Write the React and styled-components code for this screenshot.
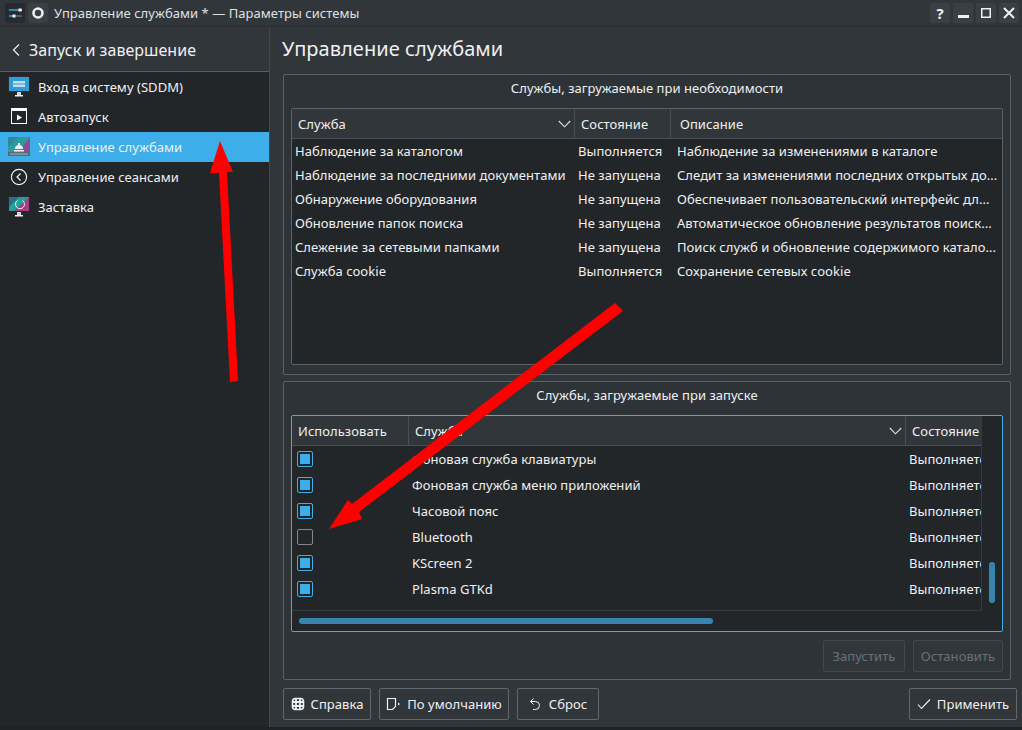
import React from "react";
import styled, { createGlobalStyle } from "styled-components";

const Global = createGlobalStyle`
  html, body { margin: 0; padding: 0; background: #31363b; }
  body { font-family: "Noto Sans", sans-serif; font-size: 13px; color: #eff0f1; letter-spacing: 0.05px; }
  * { box-sizing: border-box; }
`;
const Win = styled.div`
  position: relative; width: 1022px; height: 730px; overflow: hidden;
  display: flex; flex-direction: column; background: #31363b;
`;
const TitleBar = styled.div`
  height: 27px; flex: none; display: flex; align-items: center; padding: 1px 0 2px 5px;
  background: #31363b; border-bottom: 1px solid #2b2f33;
`;
const TitleIcon = styled.div`
  width: 20px; height: 20px; margin-right: 3px; border-radius: 2px; display: flex;
  align-items: center; justify-content: center; background: ${p => p.$dark ? "#272b2f" : "#3a3f44"};
`;
const TitleText = styled.div`
  flex: 1; margin-left: 3px; font-size: 13px; color: #dfe1e2; white-space: nowrap; line-height: 18px;
`;
const WinButton = styled.div`
  width: 20px; height: 20px; margin-right: 3px; border-radius: 2px; background: #3a3f44;
  display: flex; align-items: center; justify-content: center; color: #eff0f1;
  font-weight: 700; font-size: 15px; line-height: 20px;
`;
const Body = styled.div`
  flex: 1; display: flex; min-height: 0; height: 700px;
`;
const Sidebar = styled.div`
  width: 270px; flex: none; display: flex; flex-direction: column; border-right: 1px solid #43484d;
`;
const SideHeader = styled.div`
  height: 45px; flex: none; display: flex; align-items: center; padding: 1px 0 0 11px; gap: 8px;
  font-size: 16px; border-bottom: 1px solid #5a5f64; color: #eff0f1;
`;
const SideList = styled.div`
  flex: 1; background: #232629;
`;
const SideItem = styled.div`
  height: 30px; display: flex; align-items: center; padding-left: 8px; gap: 8px;
  background: ${p => p.$selected ? "#3daee9" : "transparent"};
  color: #eff0f1; font-size: 13px; white-space: nowrap;
`;
const Main = styled.div`
  flex: 1; min-width: 0; display: flex; flex-direction: column; padding: 0 5px 0 13px;
`;
const Heading = styled.div`
  height: 47px; flex: none; font-size: 20px; line-height: 44px; color: #eff0f1; margin-left: -1px;
`;
const Group = styled.div`
  width: 728px; height: ${p => p.$h}px; flex: none; margin-bottom: ${p => p.$mb}px;
  border: 1px solid #5c6166; border-radius: 2px; background: #2e3338;
  display: flex; flex-direction: column; padding: 0 7px;
`;
const GroupTitle = styled.div`
  height: 33px; flex: none; display: flex; align-items: center; justify-content: center;
  font-size: 13px; color: #eff0f1; padding-bottom: 8px;
`;
const Table = styled.div`
  height: ${p => p.$h}px; flex: none; position: relative; background: #232629;
  border: 1px solid ${p => p.$focus ? "#3daee9" : "#5c6166"}; border-radius: 2px; overflow: hidden;
  display: flex; flex-direction: column;
`;
const HeaderRow = styled.div`
  height: ${p => p.$h}px; flex: none; display: flex; background: #31363b;
  border-bottom: 1px solid #4a4f54; width: ${p => p.$w}px; overflow: hidden;
`;
const HeaderCell = styled.div`
  width: ${p => p.$w}px; flex: none; display: flex; align-items: center; justify-content: space-between;
  padding: 0 3px 0 ${p => p.$pl || 6}px; border-right: ${p => p.$last ? "none" : "1px solid #4a4f54"};
  color: #eff0f1; font-size: 13px; white-space: nowrap; overflow: hidden;
`;
const Row = styled.div`
  height: ${p => p.$h}px; flex: none; display: flex; align-items: center; color: #eff0f1;
  font-size: 13px; white-space: nowrap;
`;
const Cell = styled.div`
  width: ${p => p.$w}px; flex: none; padding-left: ${p => p.$pl}px; overflow: hidden; white-space: nowrap;
`;
const Check = styled.div`
  width: 16px; height: 16px; border-radius: 2px; margin-left: 5px; padding: 2px;
  border: 1px solid ${p => p.$on ? "#3daee9" : "#85888b"};
  &::after { content: ""; display: ${p => p.$on ? "block" : "none"}; width: 100%; height: 100%; background: #3daee9; }
`;
const ViewPort = styled.div`
  width: 690px; height: 195px; flex: none; border-right: 1px solid #36393d; border-bottom: 1px solid #36393d;
  display: flex; flex-direction: column; overflow: hidden;
`;
const VThumb = styled.div`
  position: absolute; left: 697px; top: 146px; width: 6px; height: 41px; border-radius: 3px; background: #3784b0;
`;
const HThumb = styled.div`
  position: absolute; left: 7px; top: 202px; width: 414px; height: 6px; border-radius: 3px; background: #3784b0;
`;
const ActionRow = styled.div`
  display: flex; justify-content: flex-end; gap: 8px; margin-top: 8px;
`;
const Button = styled.div`
  height: 32px; width: ${p => p.$w}px; flex: none; display: flex; align-items: center; justify-content: center;
  gap: ${p => p.$gap || 6}px; border-radius: 2px; font-size: 13px; white-space: nowrap; background: #31363b;
  border: 1px solid ${p => p.$disabled ? "#43484c" : "#62676b"};
  color: ${p => p.$disabled ? "#6b7075" : "#eff0f1"};
`;
const Footer = styled.div`
  display: flex; gap: 8px; margin-top: 8px;
`;
const Spacer = styled.div`flex: 1;`;
const BottomEdge = styled.div`
  height: 3px; flex: none; background: #1f2225;
`;
const ArrowLayer = styled.svg`
  position: absolute; left: 0; top: 0; width: 1022px; height: 730px; pointer-events: none;
`;

const Chevron = () => (
  <svg width="10" height="14" viewBox="0 0 10 14" fill="none"><path d="M8 1.5 2.5 7 8 12.5" stroke="#eff0f1" strokeWidth="1.2"/></svg>
);
const Down = () => (
  <svg width="13" height="8" viewBox="0 0 13 8" fill="none"><path d="M.8 1 6.5 6.8 12.2 1" stroke="#dfe1e2" strokeWidth="1.1"/></svg>
);
const MonitorLogin = () => (
  <svg width="22" height="22" viewBox="0 0 22 22">
    <rect y="0" width="22" height="16" fill="#2a2e32"/><rect x="1" y="1" width="20" height="14" fill="#2f9ed8"/>
    <rect x="5" y="5" width="12" height="2.5" fill="#c9dbe6"/><rect x="5" y="8.5" width="12" height="2.5" fill="#c9dbe6"/>
    <rect x="9" y="16" width="4" height="3" fill="#d5d8da"/><rect x="7" y="19" width="8" height="1.5" fill="#eff0f1"/>
  </svg>
);
const Autostart = () => (
  <svg width="22" height="22" viewBox="0 0 22 22" fill="none">
    <rect x="3.5" y="2.5" width="15" height="15" stroke="#fcfcfc"/><rect x="3" y="2" width="16" height="3" fill="#fcfcfc"/>
    <path d="M9 8.5v6l5-3z" fill="#fcfcfc"/>
  </svg>
);
const ServiceIcon = () => (
  <svg width="22" height="22" viewBox="0 0 22 22">
    <rect x="0" y="1" width="22" height="16" fill="#2a9ca0"/>
    <path d="M22 1v16H10z" fill="#8e4b93"/>
    <path d="M0 1h11L0 11z" fill="#34869c"/>
    <rect x="0" y="16" width="22" height="4" fill="#566b78"/>
    <path d="M7 13a4 4 0 0 1 8 0z" fill="#eff0f1"/><rect x="10" y="7" width="2" height="2" fill="#eff0f1"/>
    <rect x="6" y="14" width="10" height="1.5" fill="#eff0f1"/>
    <rect x="2" y="17.5" width="18" height="1" fill="#9fb2bc"/>
  </svg>
);
const SessionIcon = () => (
  <svg width="22" height="22" viewBox="0 0 22 22" fill="none">
    <circle cx="11" cy="11" r="7.6" stroke="#fcfcfc" strokeWidth="1.1"/><path d="M12.5 7.5 9 11l3.5 3.5" stroke="#fcfcfc" strokeWidth="1.1"/>
  </svg>
);
const ScreensaverIcon = () => (
  <svg width="22" height="22" viewBox="0 0 22 22" fill="none">
    <rect width="22" height="16" fill="#26292d"/><rect x="1" y="1" width="20" height="14" fill="#1fa39a"/>
    <path d="M21 1v14H6z" fill="#a83c86"/><path d="M1 1h10L1 11z" fill="#2c6f86"/>
    <path d="M14.5 4.5a4.5 4.5 0 1 1-5 0" stroke="#eff0f1" strokeWidth="1"/>
    <rect x="9" y="16" width="4" height="3" fill="#d5d8da"/><rect x="7" y="19" width="8" height="1.5" fill="#eff0f1"/>
  </svg>
);

const rows1 = [
  ["Наблюдение за каталогом", "Выполняется", "Наблюдение за изменениями в каталоге"],
  ["Наблюдение за последними документами", "Не запущена", "Следит за изменениями последних открытых до..."],
  ["Обнаружение оборудования", "Не запущена", "Обеспечивает пользовательский интерфейс дл..."],
  ["Обновление папок поиска", "Не запущена", "Автоматическое обновление результатов поиск..."],
  ["Слежение за сетевыми папками", "Не запущена", "Поиск служб и обновление содержимого катало..."],
  ["Служба cookie", "Выполняется", "Сохранение сетевых cookie"],
];
const rows2 = [
  ["Фоновая служба клавиатуры", true],
  ["Фоновая служба меню приложений", true],
  ["Часовой пояс", true],
  ["Bluetooth", false],
  ["KScreen 2", true],
  ["Plasma GTKd", true],
];

export default function App() {
  return (
    <Win>
      <Global />
      <TitleBar>
        <TitleIcon $dark>
          <svg width="16" height="12" viewBox="0 0 16 12" fill="none">
            <path d="M2 3h10" stroke="#3daee9" strokeWidth="1.4"/><path d="M13 3h2" stroke="#eff0f1" strokeWidth="1.4"/>
            <rect x="11.5" y="1.5" width="3" height="3" fill="#eff0f1"/>
            <path d="M2 9h4" stroke="#3daee9" strokeWidth="1.4"/><path d="M8 9h7" stroke="#6b7075" strokeWidth="1.4"/>
            <rect x="5.5" y="7.5" width="3" height="3" fill="#eff0f1"/>
          </svg>
        </TitleIcon>
        <TitleIcon>
          <svg width="14" height="14" viewBox="0 0 14 14" fill="none"><circle cx="7" cy="7" r="4.5" stroke="#eff0f1" strokeWidth="2.6"/></svg>
        </TitleIcon>
        <TitleText>Управление службами * — Параметры системы</TitleText>
        <WinButton>?</WinButton>
        <WinButton><svg width="11" height="11" viewBox="0 0 11 11"><rect x="0" y="8" width="11" height="3" fill="#eff0f1"/></svg></WinButton>
        <WinButton><svg width="10" height="10" viewBox="0 0 10 10" fill="none"><rect x=".75" y=".75" width="8.5" height="8.5" stroke="#eff0f1" strokeWidth="1.5"/></svg></WinButton>
        <WinButton><svg width="12" height="12" viewBox="0 0 12 12" fill="none"><path d="M1 1l10 10M11 1 1 11" stroke="#eff0f1" strokeWidth="2"/></svg></WinButton>
      </TitleBar>
      <Body>
        <Sidebar>
          <SideHeader><Chevron />Запуск и завершение</SideHeader>
          <SideList>
            <SideItem><MonitorLogin />Вход в систему (SDDM)</SideItem>
            <SideItem><Autostart />Автозапуск</SideItem>
            <SideItem $selected><ServiceIcon />Управление службами</SideItem>
            <SideItem><SessionIcon />Управление сеансами</SideItem>
            <SideItem><ScreensaverIcon />Заставка</SideItem>
          </SideList>
        </Sidebar>
        <Main>
          <Heading>Управление службами</Heading>
          <Group $h={301} $mb={6}>
            <GroupTitle>Службы, загружаемые при необходимости</GroupTitle>
            <Table $h={257}>
              <HeaderRow $h={30} $w={710}>
                <HeaderCell $w={283}>Служба<Down /></HeaderCell>
                <HeaderCell $w={96}>Состояние</HeaderCell>
                <HeaderCell $w={331} $last $pl={9}>Описание</HeaderCell>
              </HeaderRow>
              {rows1.map(r => (
                <Row $h={24} key={r[0]}>
                  <Cell $w={283} $pl={3}>{r[0]}</Cell>
                  <Cell $w={99} $pl={3}>{r[1]}</Cell>
                  <Cell $w={328} $pl={3}>{r[2]}</Cell>
                </Row>
              ))}
            </Table>
          </Group>
          <Group $h={299} $mb={0}>
            <GroupTitle>Службы, загружаемые при запуске</GroupTitle>
            <Table $h={217} $focus>
              <ViewPort>
                <HeaderRow $h={30} $w={690}>
                  <HeaderCell $w={117}>Использовать</HeaderCell>
                  <HeaderCell $w={497}>Служба<Down /></HeaderCell>
                  <HeaderCell $w={76} $last>Состояние</HeaderCell>
                </HeaderRow>
                {rows2.map(r => (
                  <Row $h={26} key={r[0]}>
                    <Cell $w={117}><Check $on={r[1]} /></Cell>
                    <Cell $w={497} $pl={3}>{r[0]}</Cell>
                    <Cell $w={76} $pl={3}>Выполняется</Cell>
                  </Row>
                ))}
              </ViewPort>
              <VThumb />
              <HThumb />
            </Table>
            <ActionRow>
              <Button $w={82} $disabled>Запустить</Button>
              <Button $w={90} $disabled>Остановить</Button>
            </ActionRow>
          </Group>
          <Footer>
            <Button $w={88}>
              <svg width="14" height="14" viewBox="0 0 14 14" fill="none">
                <rect x="1.500" y="1.500" width="11" height="11" rx="3" stroke="#eff0f1" strokeWidth="1.600"/>
                <path d="M5 1v12M9 1v12M1 5h12M1 9h12" stroke="#eff0f1" strokeWidth="1.800"/>
                <rect x="6" y="6" width="2" height="2" fill="#31363b"/>
              </svg>
              Справка
            </Button>
            <Button $w={130}>
              <svg width="15" height="14" viewBox="0 0 15 14" fill="none">
                <path d="M1.500 1.500h8v8l-3 3h-5z" stroke="#eff0f1" strokeWidth="1.200"/><path d="M12 5.500 14 7l-2 1.500z" fill="#eff0f1"/>
              </svg>
              По умолчанию
            </Button>
            <Button $w={82} $gap={8}>
              <svg width="12" height="14" viewBox="0 0 12 14" fill="none">
                <path d="M4.500 1.500 1.500 4.500l3 3" stroke="#eff0f1"/><path d="M1.500 4.500h5a4 4 0 0 1 0 8H4" stroke="#eff0f1"/>
              </svg>
              Сброс
            </Button>
            <Spacer />
            <Button $w={108}>
              <svg width="14" height="12" viewBox="0 0 14 12" fill="none"><path d="M1 6.500 4.500 10.500 13 1.500" stroke="#eff0f1" strokeWidth="1.100"/></svg>
              Применить
            </Button>
          </Footer>
        </Main>
      </Body>
      <BottomEdge />
      <ArrowLayer viewBox="0 0 1022 730">
        <path d="M230 382 219 173 210 173 220 141 233 172 227 172 238 381z" fill="#ff0000"/>
        <path d="M615 303 352 504 348 500 329 529 362 519 359 512 623 311z" fill="#ff0000"/>
      </ArrowLayer>
    </Win>
  );
}
